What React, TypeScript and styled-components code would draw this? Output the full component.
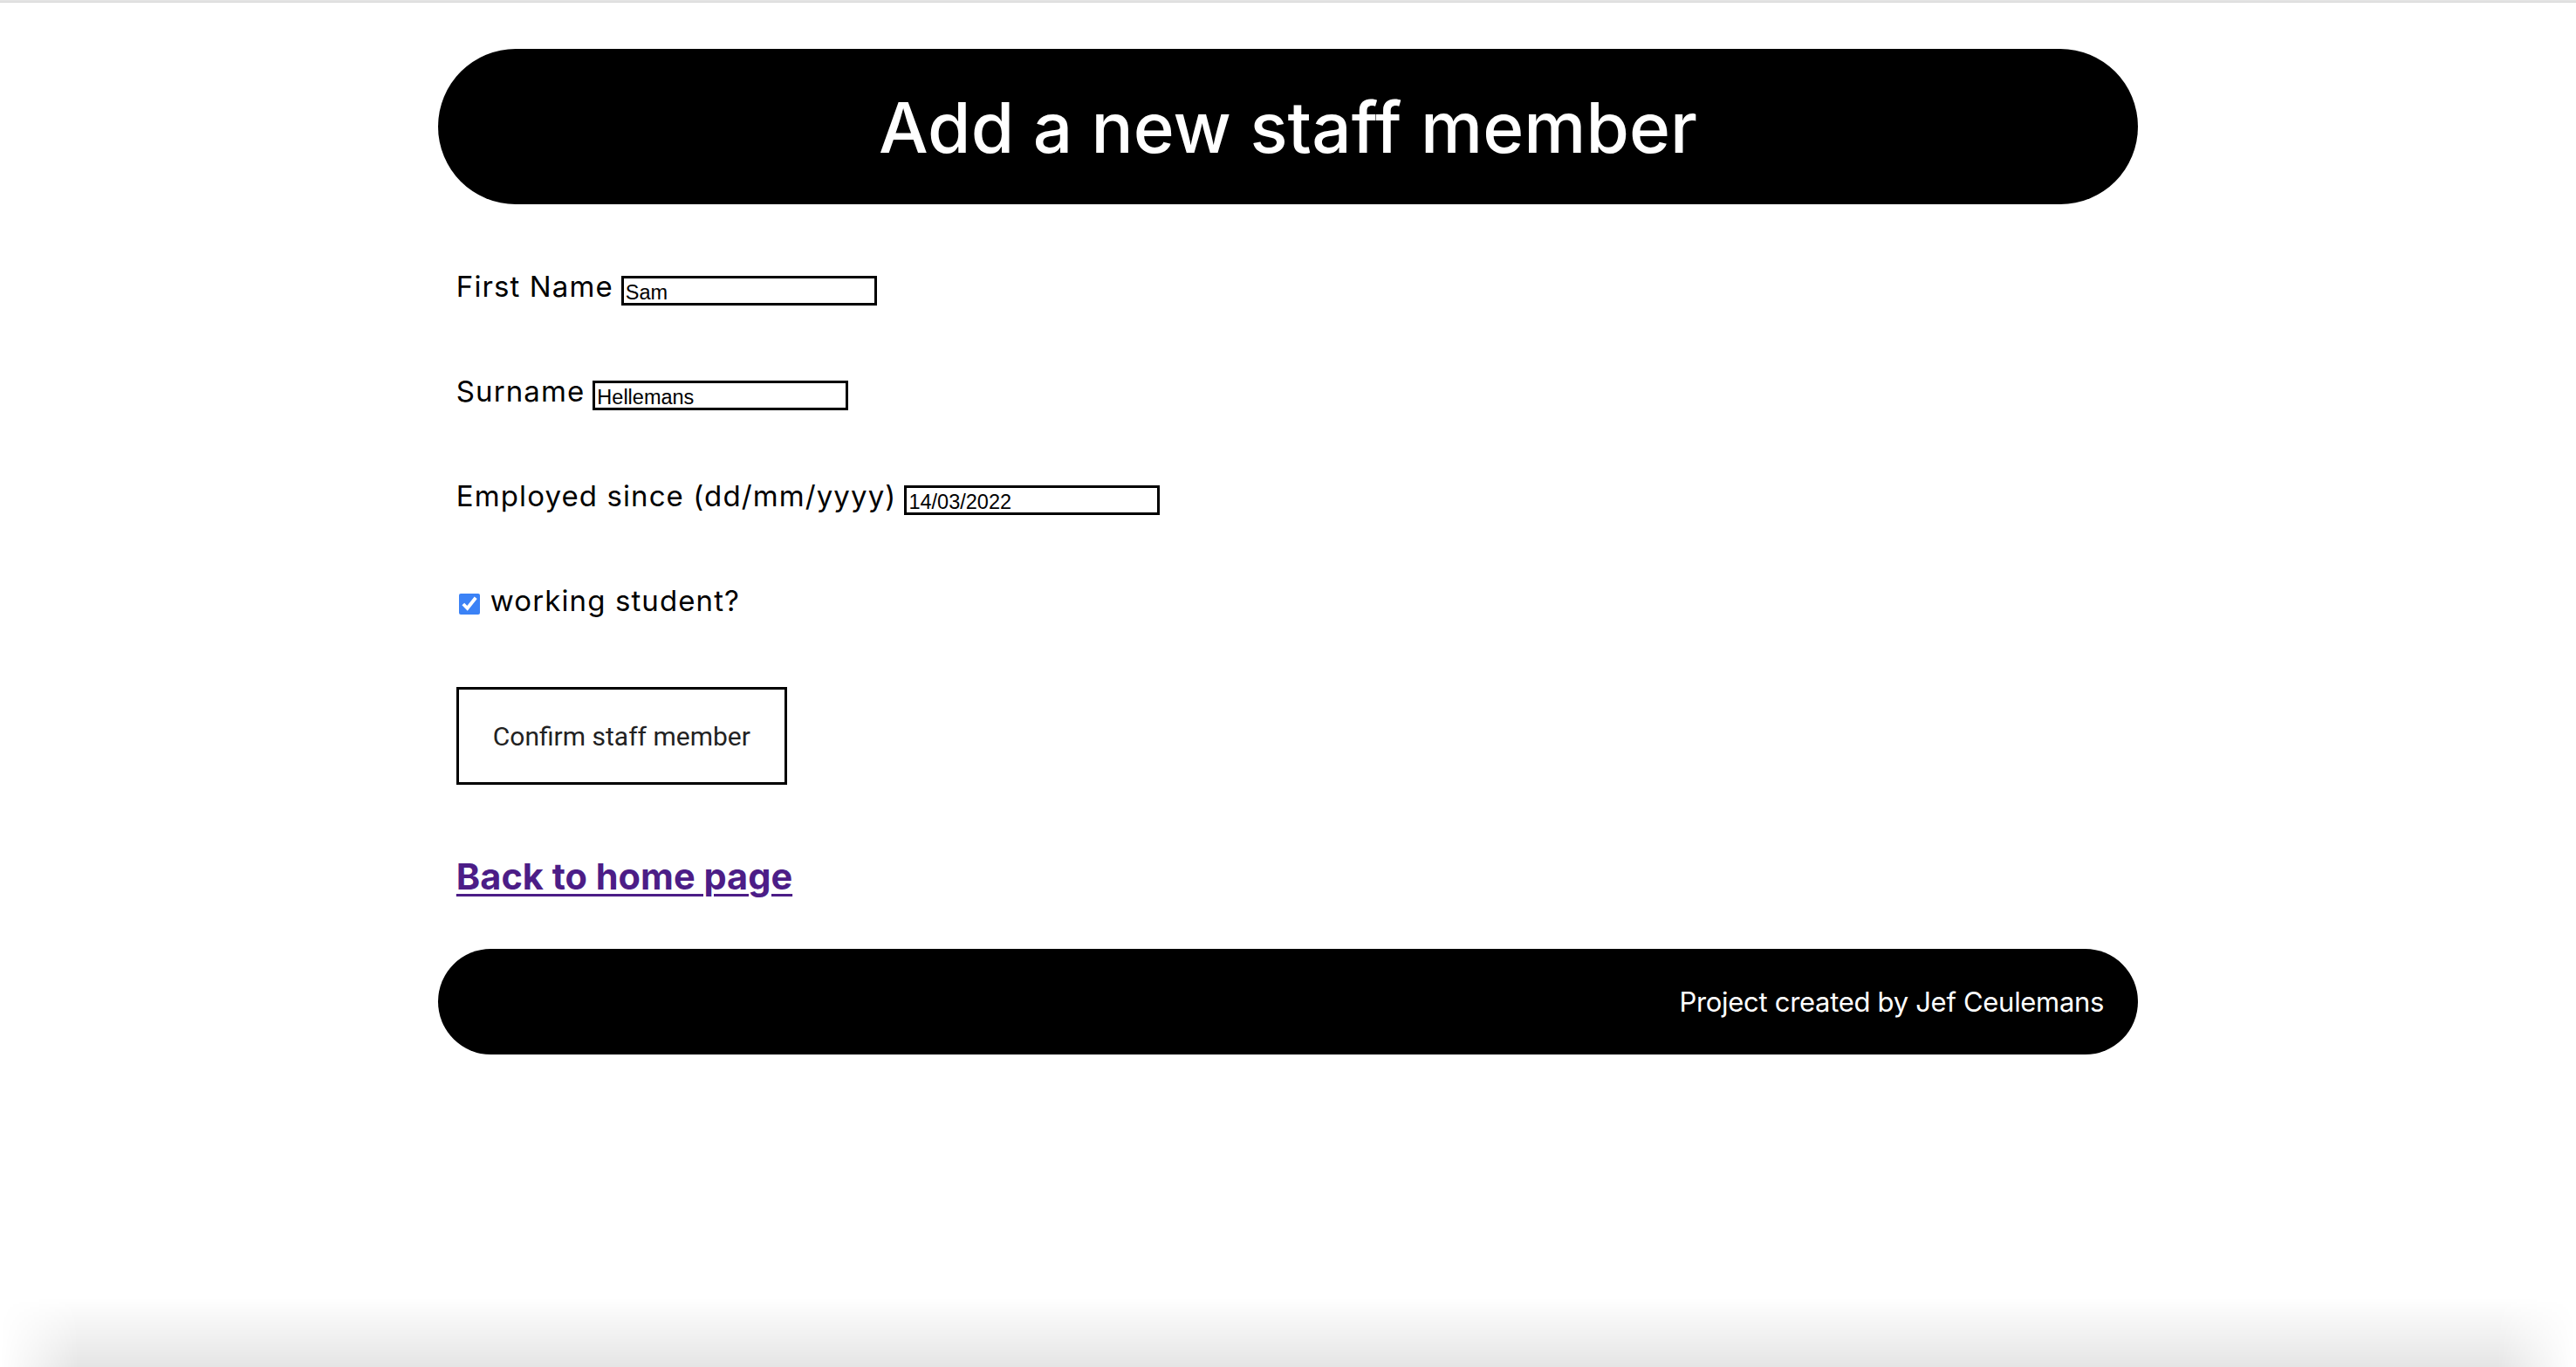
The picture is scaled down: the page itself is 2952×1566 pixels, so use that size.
import React, { useState } from "react";
import styled, { createGlobalStyle } from "styled-components";

const GlobalStyle = createGlobalStyle`
  html, body {
    margin: 0;
    padding: 0;
    background: #fff;
  }
  body {
    font-family: Inter, "Noto Sans", sans-serif;
    color: #000;
  }
`;

const TopStrip = styled.div`
  height: 2px;
  background: #e4e4e4;
  border-bottom: 1px solid #d6d6d6;
`;

const Page = styled.div`
  width: 66%;
  margin: 0 auto;
  padding-top: 53px;
`;

const Banner = styled.header`
  height: 178px;
  border-radius: 89px;
  background: #000;
  color: #fff;
  display: flex;
  align-items: center;
  justify-content: center;
`;

const Title = styled.h1`
  margin: 0;
  font-size: 80px;
  font-weight: 500;
  letter-spacing: 0.1px;
`;

const Form = styled.form`
  padding: 77px 21px 0;
  display: flex;
  flex-direction: column;
  align-items: flex-start;
`;

const Row = styled.div<{ $gap?: number }>`
  display: flex;
  align-items: center;
  gap: ${({ $gap }) => $gap ?? 9}px;
  height: 34px;
  margin-bottom: 86px;
`;

const Label = styled.label`
  font-size: 33px;
  font-weight: 400;
  letter-spacing: 1.1px;
`;

const TextInput = styled.input`
  box-sizing: border-box;
  width: 293px;
  height: 34px;
  margin-top: 10px;
  border: 3px solid #000;
  padding: 4px 2px 0;
  font-family: "Liberation Sans", Arial, sans-serif;
  font-size: 23.5px;
  color: #000;
  background: #fff;
  outline: none;
`;

const Check = styled.input`
  width: 24px;
  height: 24px;
  margin: 7px 0 0 3px;
  accent-color: #3b82f6;
`;

const ConfirmButton = styled.button`
  box-sizing: border-box;
  width: 379px;
  height: 112px;
  margin-top: -4px;
  border: 3px solid #000;
  background: #fff;
  font-family: Roboto, "Liberation Sans", sans-serif;
  font-size: 30px;
  color: #222;
  cursor: pointer;
`;

const HomeLink = styled.a`
  margin-top: 80px;
  font-size: 41.5px;
  font-weight: 700;
  color: #4c1d87;
  text-decoration: underline;
  text-underline-offset: 5px;
  text-decoration-thickness: 3px;
  letter-spacing: 0;
`;

const Footer = styled.footer`
  margin-top: 58px;
  height: 121px;
  border-radius: 61px;
  background: #000;
  color: #fff;
  display: flex;
  align-items: center;
  justify-content: flex-end;
  padding-right: 39px;
`;

const FooterText = styled.p`
  margin: 0;
  font-size: 31px;
  letter-spacing: -0.3px;
`;

const BottomShade = styled.div`
  position: fixed;
  left: 0;
  right: 0;
  bottom: 0;
  height: 80px;
  pointer-events: none;
  background: linear-gradient(to bottom, rgba(0, 0, 0, 0), rgba(0, 0, 0, 0.1));
  -webkit-mask-image: linear-gradient(to right, transparent 0, #000 90px, #000 calc(100% - 90px), transparent 100%);
  mask-image: linear-gradient(to right, transparent 0, #000 90px, #000 calc(100% - 90px), transparent 100%);
`;

export default function App() {
  const [firstName, setFirstName] = useState("Sam");
  const [surname, setSurname] = useState("Hellemans");
  const [since, setSince] = useState("14/03/2022");
  const [student, setStudent] = useState(true);

  return (
    <>
      <GlobalStyle />
      <TopStrip />
      <Page>
        <Banner>
          <Title>Add a new staff member</Title>
        </Banner>

        <Form onSubmit={(e) => e.preventDefault()}>
          <Row>
            <Label htmlFor="firstName">First Name</Label>
            <TextInput
              id="firstName"
              value={firstName}
              onChange={(e) => setFirstName(e.target.value)}
            />
          </Row>
          <Row>
            <Label htmlFor="surname">Surname</Label>
            <TextInput
              id="surname"
              value={surname}
              onChange={(e) => setSurname(e.target.value)}
            />
          </Row>
          <Row>
            <Label htmlFor="since">Employed since (dd/mm/yyyy)</Label>
            <TextInput
              id="since"
              value={since}
              onChange={(e) => setSince(e.target.value)}
            />
          </Row>
          <Row $gap={12}>
            <Check
              type="checkbox"
              id="student"
              checked={student}
              onChange={(e) => setStudent(e.target.checked)}
            />
            <Label htmlFor="student">working student?</Label>
          </Row>
          <ConfirmButton type="submit">Confirm staff member</ConfirmButton>
          <HomeLink href="#">Back to home page</HomeLink>
        </Form>

        <Footer>
          <FooterText>Project created by Jef Ceulemans</FooterText>
        </Footer>
      </Page>
      <BottomShade />
    </>
  );
}
